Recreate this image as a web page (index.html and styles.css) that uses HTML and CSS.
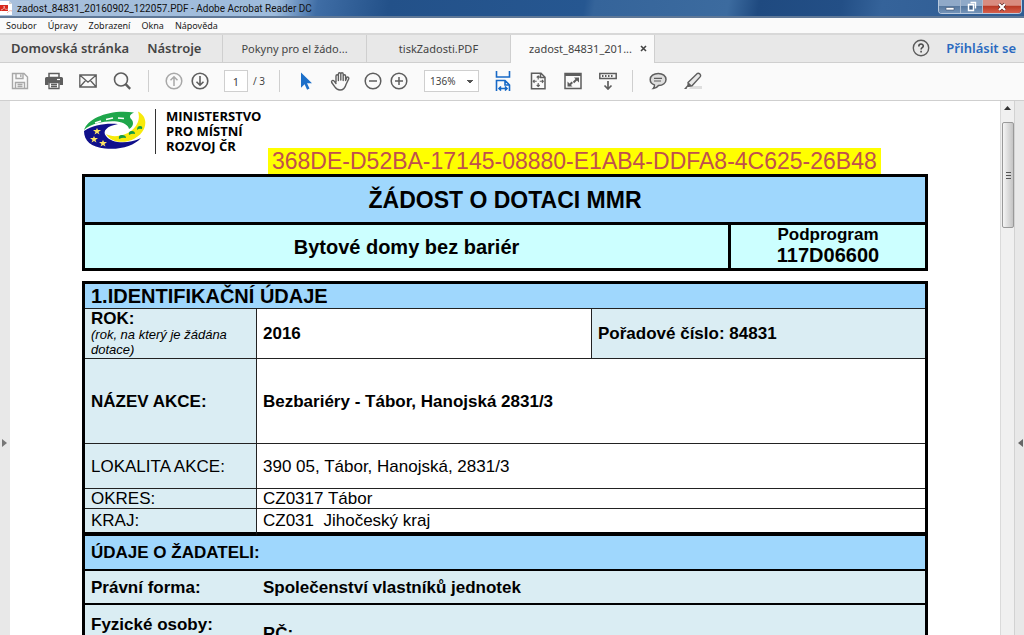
FILE: index.html
```html
<!DOCTYPE html>
<html lang="cs">
<head>
<meta charset="utf-8">
<title>zadost_84831_20160902_122057.PDF - Adobe Acrobat Reader DC</title>
<link rel="stylesheet" href="styles.css">
</head>
<body>
<header class="titlebar">
  <svg class="app-icon" width="13" height="14" viewBox="0 0 13 14"><path d="M0 0h9l3 3v11H0z" fill="#fff"/><path d="M0 4h8v6H0z" fill="#d8281c"/><path d="M9 0v3h3" fill="#ccc"/><path d="M1 9c3-1 4-3 3-4c0 3 2 4 4 3M7 12c2-2 3-3 5-2" fill="none" stroke="#f0b0a8"/></svg>
  <h1 class="title">zadost_84831_20160902_122057.PDF - Adobe Acrobat Reader DC</h1>
  <div class="window-buttons">
    <button class="win-btn" aria-label="Minimalizovat"><svg width="12" height="12" viewBox="0 0 12 12"><path d="M2 6.500h8v2.500H2z" fill="#fff" stroke="#3c5270" stroke-width=".6"/></svg></button>
    <button class="win-btn" aria-label="Obnovit"><svg width="12" height="12" viewBox="0 0 12 12"><path d="M4.500 1.500h5v6M2.500 3.500h5v6h-5z" fill="none" stroke="#fff" stroke-width="1.400"/><path d="M4.200 5.500h1.600v2H4.200z" fill="none" stroke="#3c5270" stroke-width=".6"/></svg></button>
    <button class="win-btn win-close" aria-label="Zavřít"><svg width="12" height="12" viewBox="0 0 12 12"><path d="M3 3l6 6M9 3l-6 6" stroke="#5a2020" stroke-width="3.400"/><path d="M3 3l6 6M9 3l-6 6" stroke="#fff" stroke-width="2.200"/></svg></button>
  </div>
</header>

<nav class="menubar">
  <button>Soubor</button><button>Úpravy</button><button>Zobrazení</button><button>Okna</button><button>Nápověda</button>
</nav>

<div class="tabbar">
  <div class="home-tabs">
    <button class="home-tab">Domovská stránka</button>
    <button class="home-tab">Nástroje</button>
  </div>
  <button class="tab">Pokyny pro el žádo...</button>
  <button class="tab">tiskZadosti.PDF</button>
  <div class="tab tab-active">
    <button class="tab-name">zadost_84831_201...</button>
    <button class="tab-close" aria-label="Zavřít kartu"><svg width="7" height="7" viewBox="0 0 7 7"><path d="M1 1l5 5M6 1L1 6" stroke="#444" stroke-width="1.600"/></svg></button>
  </div>
  <div class="account">
    <button class="help" aria-label="Nápověda"><svg width="18" height="18" viewBox="0 0 18 18"><circle cx="9" cy="9" r="7.700" fill="none" stroke="#5c5c5c" stroke-width="1.400"/><path d="M6.800 7.400c0-3.200 4.500-3 4.500-.4c0 1.700-2.200 1.700-2.200 3.500M9.100 11.800v1.700" fill="none" stroke="#4c4c4c" stroke-width="1.600"/></svg></button>
    <a class="signin" href="#">Přihlásit se</a>
  </div>
</div>

<div class="toolbar">
  <div class="group group-file">
    <button class="tool" aria-label="Uložit"><svg width="18" height="18" viewBox="0 0 18 18" fill="none" stroke="#a8a8a8" stroke-width="1.400"><path d="M1.500 1.500h11.500l3.500 3.500v11.500h-15zM5 1.500v5h7v-5M4.500 16.500v-6h9v6M6.500 12.500h5M6.500 14.500h5M9.800 2.500v2.500"/></svg></button>
    <button class="tool" aria-label="Tisk"><svg width="18" height="18" viewBox="0 0 18 18"><path d="M4 1.500h10v4H4z" fill="#fff" stroke="#5e5e5e" stroke-width="1.500"/><path d="M1.500 5h15q1.500 0 1.500 1.500V13h-3.500v-2.500h-11V13H0V6.500Q0 5 1.500 5z" fill="#5e5e5e"/><path d="M12 7.500h3" stroke="#fff" stroke-width="1.200"/><path d="M4 10.500h10v6H4zM6 12.500h6M6 14.500h6" fill="#fff" stroke="#5e5e5e" stroke-width="1.300"/></svg></button>
    <button class="tool" aria-label="E-mail"><svg width="18" height="18" viewBox="0 0 18 18" fill="none" stroke="#5e5e5e" stroke-width="1.300"><path d="M.8 3h16.400v12H.8zM1 3.200l8 7l8-7M1 14.800l5.800-6.500M17 14.800l-5.800-6.500"/></svg></button>
    <button class="tool" aria-label="Hledat"><svg width="18" height="18" viewBox="0 0 18 18" fill="none" stroke="#5e5e5e"><circle cx="8" cy="7.500" r="6.500" stroke-width="1.600"/><path d="M12.600 12.200l4.600 4.600" stroke-width="2.400"/></svg></button>
  </div>
  <div class="group group-page">
    <button class="tool" aria-label="Předchozí stránka"><svg width="18" height="18" viewBox="0 0 18 18" fill="none" stroke="#a8a8a8" stroke-width="1.500"><circle cx="9" cy="9" r="7.800"/><path d="M9 14V5M5.500 8.300L9 4.800l3.500 3.500"/></svg></button>
    <button class="tool" aria-label="Další stránka"><svg width="18" height="18" viewBox="0 0 18 18" fill="none" stroke="#5e5e5e" stroke-width="1.600"><circle cx="9" cy="9" r="7.800"/><path d="M9 4v9M5.500 9.700L9 13.200l3.500-3.500"/></svg></button>
    <input class="page-input" type="text" value="1" aria-label="Číslo stránky">
    <span class="page-total">/ 3</span>
  </div>
  <div class="group group-view">
    <button class="tool tool-select" aria-label="Výběr"><svg width="18" height="18" viewBox="0 0 18 18"><path d="M5 .5v15.200l3.600-3.500l2.500 5.500l2.400-1.100l-2.500-5.400h5z" fill="#1c6fc9"/></svg></button>
    <button class="tool tool-hand" aria-label="Ruka"><svg width="20" height="20" viewBox="0 0 20 20" fill="none" stroke="#5e5e5e" stroke-width="1.400" stroke-linecap="round" stroke-linejoin="round"><path d="M6 11V5q0-1.200 1.200-1.200t1.200 1.200V9.500V3q0-1.200 1.200-1.200t1.200 1.200V9V3q0-1.200 1.200-1.200t1.200 1.200V9.500V5q0-1.200 1.200-1.200t1.200 1.200V9.500l1-2.800q.6-1 1.500-.6t.7 1.500L16 13.500q-1.400 5.500-6 5.500q-3.300 0-5-2.800L1.700 11.500q-.6-1.300.5-1.900t2 .5L6 12.500"/></svg></button>
    <button class="tool" aria-label="Zmenšit"><svg width="18" height="18" viewBox="0 0 18 18" fill="none" stroke="#5e5e5e" stroke-width="1.500"><circle cx="9" cy="9" r="7.800"/><path d="M5 9h8"/></svg></button>
    <button class="tool" aria-label="Zvětšit"><svg width="18" height="18" viewBox="0 0 18 18" fill="none" stroke="#5e5e5e" stroke-width="1.500"><circle cx="9" cy="9" r="7.800"/><path d="M5 9h8M9 5v8"/></svg></button>
    <select class="zoom" aria-label="Lupa"><option>136%</option></select>
  </div>
  <div class="group group-fit">
    <button class="tool" aria-label="Šířka stránky"><svg width="18" height="20" viewBox="0 0 18 20" fill="none" stroke="#1769c7" stroke-width="1.600"><path d="M2.500 0v6h13V0M2.500 20V9.500h8.500l4.500 4.500v6M11 9.500v4.500h4.500M5 17.500h8M7 15.500l-2 2l2 2M11 15.500l2 2l-2 2"/></svg></button>
    <button class="tool" aria-label="Celá stránka"><svg width="18" height="18" viewBox="0 0 18 18" fill="none" stroke="#5e5e5e" stroke-width="1.500"><path d="M2.500 1.200h9.500l4 4v11.500H2.500zM11.500 1.500V5.500H16"/><path d="M9.200 4v3.500M9.200 11v3.500M4.200 9.300h3.500M10.800 9.300h3.500M7.700 5.500l1.500-1.500l1.500 1.500M7.700 13l1.500 1.500l1.500-1.500M5.500 7.800L4.200 9.300l1.300 1.500M13 7.800l1.300 1.500l-1.300 1.500" stroke-width="1.100"/></svg></button>
    <button class="tool" aria-label="Celá obrazovka"><svg width="18" height="18" viewBox="0 0 18 18"><path d="M1 1.500h16v15H1z" fill="none" stroke="#5e5e5e" stroke-width="1.500"/><path d="M1 1h16v3H1zM10 5.500h5v5zM3.500 9.500v5h5z" fill="#5e5e5e"/><path d="M9.500 10.500l3.500-3.500M5 13.500L8.300 10.300" stroke="#5e5e5e" stroke-width="2"/></svg></button>
    <button class="tool" aria-label="Režim čtení"><svg width="18" height="18" viewBox="0 0 18 18" fill="none" stroke="#5e5e5e"><path d="M.8 1.500h16.400v5H.8z" stroke-width="1.500"/><path d="M3 4h12" stroke-width="2" stroke-dasharray="1.500 1.500"/><path d="M9 9v8M5.500 13.500L9 17l3.500-3.500" stroke-width="1.700"/></svg></button>
  </div>
  <div class="group group-comment">
    <button class="tool" aria-label="Poznámka"><svg width="18" height="18" viewBox="0 0 18 18"><path d="M9.300 1.500c4.500 0 7.700 2.500 7.700 6c0 3.400-3 6-7.500 6q-2 2.800-5.200 3q1.500-1.500 1.100-3.600C2.800 12 1.200 10 1.200 7.500c0-3.500 3.500-6 8.100-6z" fill="#dedede" stroke="#5e5e5e" stroke-width="1.500"/><path d="M5 6.300h8M5 9h7" stroke="#5e5e5e" stroke-width="1.200"/></svg></button>
    <button class="tool" aria-label="Zvýraznit"><svg width="18" height="18" viewBox="0 0 18 18"><path d="M7 14h11v3H5z" fill="#dedede"/><path d="M4 10.500L13 1.700q1.300-.9 2.800.2q1.300 1.300.5 2.700L8 13.800l-3.500.5z" fill="#e8e8e8" stroke="#5e5e5e" stroke-width="1.400"/><path d="M4.500 10.500L8 13.800L3.500 15L2.500 17H0l3.500-4z" fill="#5e5e5e"/></svg></button>
  </div>
</div>

<div class="workspace">
  <aside class="pane"><button class="pane-toggle" aria-label="Zobrazit levý panel"><svg width="6" height="10" viewBox="0 0 6 10"><path d="M0 1l5 4l-5 4z" fill="#777"/></svg></button></aside>
  <main class="page">
    <div class="logo">
      <svg width="62" height="40" viewBox="0 0 62 40">
        <path d="M0 20C4 8 26-1 50 2.500C45 5 45 7 48 10C50 13 49 17 45 19C44 15 40 12.500 33 11.500C22 10.500 8 13 0 20z" fill="#1ea64a"/>
        <path d="M54 1.500C61 5 63 12 60 19C55 29 42 34 31 31C26 29 24 27 22 24C29 28 40 26 47 21C55 15 56 7 54 1.500z" fill="#f8ea0c"/>
        <path d="M0 21C9 15 21 13 34 14C23 16 18 21 22 26C27 33 43 35 57 28C50 36 36 40 21 38.500C7 37 0 31 0 21z" fill="#10108a"/>
        <path d="M11 13l6-2M22 9.500l7-1.500M34 8l6 .500" fill="none" stroke="#fff" stroke-width="1.600"/>
        <path d="M35 29q-1-4 3-4q4 0 4 3q-3-1-7 1zM45 25q-1-4 3-4q3 0 3 3q-3-1-6 1zM53 20q0-4 3-4q3 0 2 3q-3-1-5 1z" fill="#159b45"/>
        <g fill="#ffe566"><path id="star" d="M13 18l1 2h3l-2.500 2l1 2.500l-2.500-1.500l-2.500 1.500l1-2.500L9 20h3z"/><use href="#star" x="-3" y="8"/><use href="#star" x="6" y="12"/></g>
      </svg>
      <p class="logo-text">MINISTERSTVO<br>PRO MÍSTNÍ<br>ROZVOJ ČR</p>
    </div>
    <p class="code"><mark>368DE-D52BA-17145-08880-E1AB4-DDFA8-4C625-26B48</mark></p>

    <table class="heading-table">
      <colgroup><col><col class="col-program"></colgroup>
      <tr><th colspan="2" class="form-title">ŽÁDOST O DOTACI MMR</th></tr>
      <tr><td class="program-name">Bytové domy bez bariér</td><td class="program">Podprogram<strong>117D06600</strong></td></tr>
    </table>

    <table class="form-table">
      <colgroup><col class="col-label"><col class="col-half"><col></colgroup>
      <tr class="row-section"><th colspan="3">1.IDENTIFIKAČNÍ ÚDAJE</th></tr>
      <tr class="row-year"><th>ROK:<em>(rok, na který je žádána dotace)</em></th><td class="bold">2016</td><td class="bold tinted">Pořadové číslo: 84831</td></tr>
      <tr class="row-name"><th>NÁZEV AKCE:</th><td colspan="2" class="bold">Bezbariéry - Tábor, Hanojská 2831/3</td></tr>
      <tr class="row-place"><th class="plain">LOKALITA AKCE:</th><td colspan="2">390 05, Tábor, Hanojská, 2831/3</td></tr>
      <tr class="row-okres"><th class="plain">OKRES:</th><td colspan="2">CZ0317 Tábor</td></tr>
      <tr class="row-kraj"><th class="plain">KRAJ:</th><td colspan="2">CZ031&nbsp; Jihočeský kraj</td></tr>
      <tr class="row-applicant"><th colspan="3">ÚDAJE O ŽADATELI:</th></tr>
      <tr class="row-legal"><th>Právní forma:</th><td colspan="2">Společenství vlastníků jednotek</td></tr>
      <tr class="row-person"><th>Fyzické osoby:</th><td colspan="2">RČ:</td></tr>
    </table>
  </main>
  <div class="scrollbar">
    <button class="scroll-up" aria-label="Posunout nahoru"><svg width="7" height="4" viewBox="0 0 7 4"><path d="M0 4l3.500-4L7 4z" fill="#333"/></svg></button>
    <div class="scroll-thumb"><svg width="5" height="7" viewBox="0 0 5 7"><path d="M0 .5h5M0 3.500h5M0 6.500h5" stroke="#555"/></svg></div>
  </div>
  <aside class="pane pane-right"><button class="pane-toggle" aria-label="Zobrazit pravý panel"><svg width="6" height="10" viewBox="0 0 6 10"><path d="M6 1L1 5l5 4z" fill="#666"/></svg></button></aside>
</div>
</body>
</html>
```
FILE: styles.css
```css
* { box-sizing: border-box; }
html, body { height: 100%; margin: 0; }
body {
  display: flex;
  flex-direction: column;
  overflow: hidden;
  background: #fafafa;
  font-family: "Noto Sans", "Open Sans", sans-serif;
  color: #444;
}
button {
  margin: 0;
  padding: 0;
  border: 0;
  background: none;
  font: inherit;
  color: inherit;
}
svg { display: block; }
h1, p { margin: 0; }

.titlebar {
  flex: none;
  height: 18px;
  display: flex;
  align-items: flex-start;
  border-bottom: 2px solid #5f7897;
  background: linear-gradient(100deg, #a9c0dc 0, #9dbbdc 27%, #3f6da5 31%, #235189 38%, #265791 57%, #35649a 58%, #3c6b9f 71%, #1f4a80 74%, #234f86 82%, #35639a 86%, #2f5c93 100%);
}
.app-icon { margin-top: 1px; }
.title {
  flex: 1;
  padding-left: 4px;
  font-family: Roboto, sans-serif;
  font-size: 10px;
  line-height: 17px;
  font-weight: 400;
  color: #111;
}
.window-buttons {
  display: flex;
  margin-right: 2px;
  border: 1px solid #b9c9dd;
  border-top: 0;
  border-radius: 0 0 4px 4px;
  overflow: hidden;
}
.win-btn {
  width: 22px;
  height: 13px;
  display: flex;
  align-items: center;
  justify-content: center;
  border-right: 1px solid #a9bad0;
  background: linear-gradient(#8fa9c8 45%, #56789f 50%, #7493b8);
}
.win-close {
  width: 38px;
  border-right: 0;
  background: linear-gradient(#d98c80 40%, #b93a26 50%, #d8604c);
}

.menubar {
  flex: none;
  height: 15px;
  display: flex;
  gap: 11px;
  padding-left: 6px;
  font-size: 9px;
  line-height: 15px;
  color: #1a1a1a;
}

.tabbar {
  flex: none;
  height: 30px;
  display: flex;
  border-top: 2px solid #d8d8d8;
  background: #e8e8e8;
  box-shadow: inset 0 -1px #cfcfcf;
}
.home-tabs {
  width: 223px;
  display: flex;
  gap: 18px;
  padding-left: 11px;
  border-right: 1px solid #cfcfcf;
}
.home-tab { padding-bottom: 2px; font-size: 13px; font-weight: 600; white-space: nowrap; }
.tab {
  width: 144px;
  border-right: 1px solid #cfcfcf;
  padding-bottom: 2px;
  font-size: 11px;
  white-space: nowrap;
}
.tab-active {
  display: flex;
  align-items: center;
  justify-content: flex-end;
  gap: 8px;
  padding-right: 7px;
  background: #fafafa;
}
.account {
  flex: 1;
  display: flex;
  align-items: center;
  justify-content: flex-end;
  gap: 16px;
  padding: 0 8px 2px 0;
}
.signin {
  font-size: 13px;
  font-weight: 600;
  color: #2a6ac0;
  text-decoration: none;
}

.toolbar {
  flex: none;
  height: 38px;
  display: flex;
  align-items: center;
  padding-bottom: 1px;
  border-bottom: 1px solid #cfcfcf;
}
.group {
  display: flex;
  align-items: center;
  height: 22px;
}
.group + .group { border-left: 1px solid #cfcfcf; }
.group-file { width: 148px; gap: 16px; padding-left: 11px; }
.group-page { width: 131px; gap: 8px; padding-left: 16px; }
.group-view { width: 206px; gap: 8px; padding-left: 16px; }
.group-view + .group-fit { width: 147px; gap: 17px; padding-left: 9px; border-left: 0; }
.group-comment { gap: 17px; padding-left: 16px; }
.tool-hand { margin: 0 6px 0 8px; }
.page-input {
  width: 24px;
  height: 22px;
  margin-left: 7px;
  padding: 0;
  border: 1px solid #cfcfcf;
  background: #fff;
  text-align: center;
  font: 11px "Noto Sans", sans-serif;
  color: #444;
}
.page-total { margin-left: -3px; font-size: 10px; }
.zoom {
  width: 55px;
  height: 22px;
  margin-left: 8px;
  padding: 0 5px;
  border: 1px solid #cfcfcf;
  border-radius: 0;
  appearance: none;
  background:
    linear-gradient(to bottom right, #555 50%, transparent 50%) 45px 9px / 3px 4px no-repeat,
    linear-gradient(to bottom left, #555 50%, transparent 50%) 42px 9px / 3px 4px no-repeat,
    #fff;
  font: 10px "Noto Sans", sans-serif;
  color: #444;
}

.workspace {
  flex: 1;
  min-height: 0;
  display: flex;
}
.pane {
  flex: none;
  width: 10px;
  display: flex;
  align-items: center;
  background: #e8e8e8;
}
.pane-toggle { padding: 150px 0 0 2px; }
.pane-right { border-left: 1px solid #d2d2d2; }
.page {
  flex: 1;
  overflow: hidden;
  padding: 0 72px;
  background: #fff;
  font-family: "Liberation Sans", Arial, sans-serif;
  color: #000;
}
.scrollbar {
  flex: none;
  width: 14px;
  border-left: 1px solid #dadada;
  background: #f0f0f0;
}
.scroll-up {
  width: 100%;
  height: 21px;
  display: flex;
  align-items: center;
  justify-content: center;
  padding-bottom: 7px;
}
.scroll-thumb {
  height: 106px;
  margin: 0 0 0 1px;
  display: flex;
  align-items: center;
  justify-content: center;
  border: 1px solid #999;
  border-radius: 2px;
  background: linear-gradient(to right, #f5f5f5, #dcdcdc 50%, #c4c4c4);
}

.logo {
  height: 47px;
  display: flex;
  align-items: flex-start;
  gap: 9px;
  padding: 9px 0 0 2px;
}
.logo-text {
  padding-left: 10px;
  border-left: 1px solid #333;
  font: 700 13px/15px "Open Sans", "Noto Sans", sans-serif;
  margin-top: -1px;
}
.code {
  padding-left: 186px;
  font-size: 23px;
  line-height: 26px;
  white-space: nowrap;
}
.code mark {
  display: inline-block;
  padding: 0 4px;
  background: #ff0;
  color: #c0504d;
}

table {
  width: 100%;
  table-layout: fixed;
  border-collapse: separate;
  border-spacing: 0;
  border: 3px solid #000;
}
th, td { padding: 0; }
.heading-table { text-align: center; font-weight: 700; }
.col-program { width: 197px; }
.form-title {
  height: 48px;
  padding-top: 2px;
  border-bottom: 3px solid #000;
  background: #9fd7fd;
  font-size: 23px;
}
.program-name { height: 43px; padding-top: 2px; background: #cff; font-size: 20px; }
.program {
  padding-bottom: 3px;
  border-left: 3px solid #000;
  background: #cff;
  font-size: 17px;
  line-height: 20px;
}
.program strong { display: block; font-size: 20px; }

.form-table { margin-top: 10px; font-size: 17px; line-height: 17px; }
.form-table th, .form-table td {
  padding-left: 6px;
  border-bottom: 1px solid #222;
  text-align: left;
}
.form-table th { background: #daedf3; border-right: 1px solid #222; }
.form-table th[colspan] { border-right: 0; background: #9fd7fd; }
.col-label { width: 172px; }
.col-half { width: 334px; }
.form-table .plain { font-weight: 400; }
.bold { font-weight: 700; }
.form-table .tinted { border-left: 1px solid #222; background: #daedf3; }
.row-section { height: 25px; font-size: 20px; }
.row-year { height: 50px; }
.row-year em { display: block; font-size: 13px; line-height: 15px; font-weight: 400; }
.row-name { height: 85px; }
.row-place { height: 45px; }
.row-okres { height: 20px; }
.row-kraj { height: 27px; }
.form-table .row-kraj th, .form-table .row-kraj td { border-bottom: 4px solid #000; }
.row-applicant { height: 35px; }
.form-table .row-applicant th,
.form-table .row-legal th,
.form-table .row-legal td { border-bottom: 2px solid #000; }
.row-legal { height: 34px; font-weight: 700; }
.form-table .row-legal th, .form-table .row-person th { border-right: 0; }
.form-table .row-legal td, .form-table .row-person td { background: #daedf3; }
.row-person { height: 58px; font-weight: 700; }
.form-table .row-person th { padding-bottom: 18px; }
```
